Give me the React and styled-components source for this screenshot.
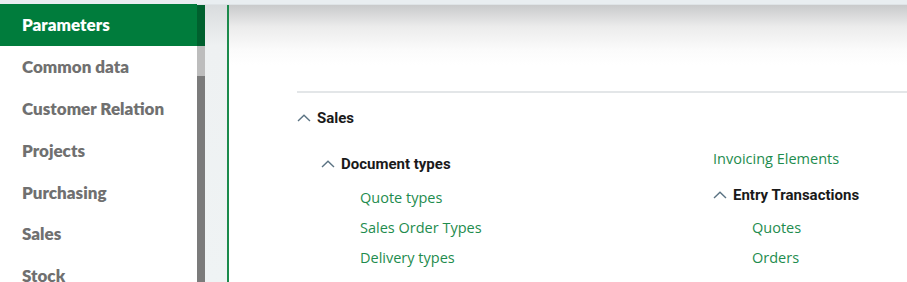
import styled, { createGlobalStyle } from "styled-components"

const GlobalStyle = createGlobalStyle`
  html, body {
    margin: 0;
    padding: 0;
    background: #ffffff;
    overflow: hidden;
  }
`

const Page = styled.div`
  width: 907px;
  height: 282px;
  display: flex;
  flex-direction: column;
  overflow: hidden;
`

const TopStrip = styled.div`
  height: 5px;
  flex-shrink: 0;
  background: #e9eef1;
  border-bottom: 1px solid #dfe4e7;
  box-sizing: border-box;
`

const Body = styled.div`
  flex: 1;
  display: flex;
  min-height: 0;
`

const Sidebar = styled.div`
  width: 205px;
  display: flex;
  flex-shrink: 0;
`

const NavList = styled.ul`
  list-style: none;
  margin: -1px 0 0;
  padding: 0;
  width: 197px;
`

const NavItem = styled.li`
  height: 41.8px;
  display: flex;
  align-items: center;
  padding-left: 22px;
  font-family: Lato, "Open Sans", sans-serif;
  font-weight: 800;
  font-size: 17px;
  color: ${(p) => (p.$active ? "#ffffff" : "#707070")};
  background: ${(p) => (p.$active ? "#007c3c" : "transparent")};
`

const Scrollbar = styled.div`
  width: 8px;
  display: flex;
  flex-direction: column;
`

const ScrollPart = styled.div`
  height: ${(p) => p.$h}px;
  flex: ${(p) => (p.$grow ? 1 : "none")};
  background: ${(p) => p.$color};
`

const Gutter = styled.div`
  width: 22px;
  flex-shrink: 0;
  background: linear-gradient(to bottom, #d9dcde 0px, #eef1f2 40px, #eff3f4 100%);
  border-right: 2px solid #1b8a4c;
`

const Main = styled.div`
  flex: 1;
  background: linear-gradient(to bottom, #c9cacb 0px, #ececec 22px, #fbfbfb 45px, #ffffff 60px);
  padding: 86px 0 0 68px;
`

const Divider = styled.div`
  height: 2px;
  background: #e3e6e8;
`

const Columns = styled.div`
  display: flex;
`

const LeftCol = styled.div`
  width: 416px;
  padding-top: 15px;
`

const RightCol = styled.div`
  padding-top: 51px;
`

const Heading = styled.div`
  display: flex;
  align-items: center;
  gap: 6px;
  font-family: Roboto, "Open Sans", sans-serif;
  font-weight: 700;
  font-size: 15px;
  color: #1a1a1a;
  height: 20px;
  margin-left: ${(p) => p.$indent || 0}px;
  margin-top: ${(p) => p.$top || 0}px;
`

const Caret = styled.svg`
  width: 14px;
  height: 14px;
  flex-shrink: 0;
`

const Link = styled.a`
  display: block;
  font-family: "Open Sans", sans-serif;
  font-size: 14.5px;
  color: #1e8c4e;
  text-decoration: none;
  line-height: 30px;
  margin-left: ${(p) => p.$indent || 0}px;
`

const LinkGroup = styled.div`
  margin-top: ${(p) => p.$top || 0}px;
`

const CaretIcon = () => (
  <Caret viewBox="0 0 14 14">
    <path d="M1 10 L7 4.2 L13 10" fill="none" stroke="#5b7383" strokeWidth="1.4" />
  </Caret>
)

const navItems = [
  "Parameters",
  "Common data",
  "Customer Relation",
  "Projects",
  "Purchasing",
  "Sales",
  "Stock",
]

const App = () => (
  <Page>
    <GlobalStyle />
    <TopStrip />
    <Body>
      <Sidebar>
        <NavList>
          {navItems.map((item, index) => (
            <NavItem key={item} $active={index === 0}>
              {item}
            </NavItem>
          ))}
        </NavList>
        <Scrollbar>
          <ScrollPart $h={41} $color="#00602e" />
          <ScrollPart $h={30} $color="#bdbdbd" />
          <ScrollPart $grow $color="#7b7b7b" />
        </Scrollbar>
      </Sidebar>
      <Gutter />
      <Main>
        <Divider />
        <Columns>
          <LeftCol>
            <Heading>
              <CaretIcon />
              Sales
            </Heading>
            <Heading $indent={24} $top={26}>
              <CaretIcon />
              Document types
            </Heading>
            <LinkGroup $top={9}>
              <Link $indent={63}>Quote types</Link>
              <Link $indent={63}>Sales Order Types</Link>
              <Link $indent={63}>Delivery types</Link>
            </LinkGroup>
          </LeftCol>
          <RightCol>
            <Link>Invoicing Elements</Link>
            <Heading $top={11}>
              <CaretIcon />
              Entry Transactions
            </Heading>
            <LinkGroup $top={8}>
              <Link $indent={39}>Quotes</Link>
              <Link $indent={39}>Orders</Link>
            </LinkGroup>
          </RightCol>
        </Columns>
      </Main>
    </Body>
  </Page>
)

export default App
